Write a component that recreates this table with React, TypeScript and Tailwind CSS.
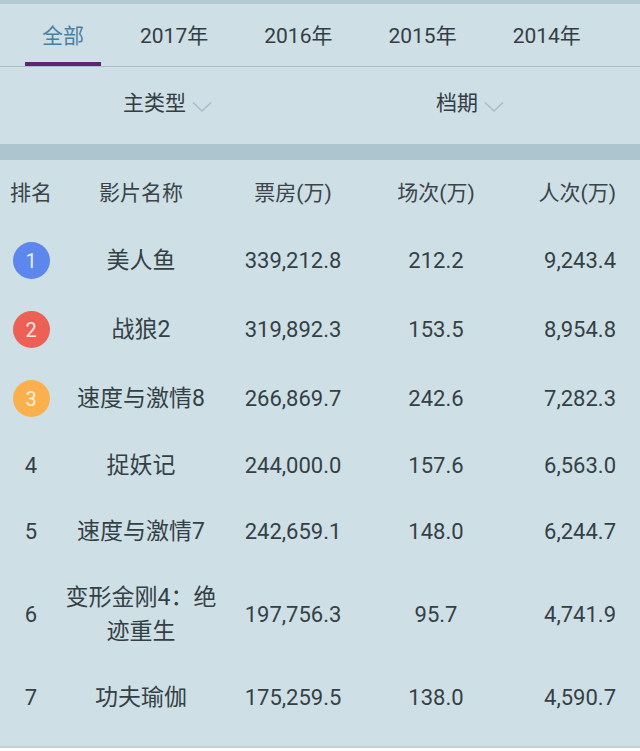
import React from "react";

const tabs = ["全部", "2017年", "2016年", "2015年", "2014年"];

const rows: { rank: number; name: React.ReactNode; box: string; shows: string; people: string }[] = [
  { rank: 1, name: "美人鱼", box: "339,212.8", shows: "212.2", people: "9,243.4" },
  { rank: 2, name: "战狼2", box: "319,892.3", shows: "153.5", people: "8,954.8" },
  { rank: 3, name: "速度与激情8", box: "266,869.7", shows: "242.6", people: "7,282.3" },
  { rank: 4, name: "捉妖记", box: "244,000.0", shows: "157.6", people: "6,563.0" },
  { rank: 5, name: "速度与激情7", box: "242,659.1", shows: "148.0", people: "6,244.7" },
  {
    rank: 6,
    name: (
      <>
        变形金刚4：绝
        <br />
        迹重生
      </>
    ),
    box: "197,756.3",
    shows: "95.7",
    people: "4,741.9",
  },
  { rank: 7, name: "功夫瑜伽", box: "175,259.5", shows: "138.0", people: "4,590.7" },
];

function Chevron() {
  return (
    <svg width="20" height="12" viewBox="0 0 20 12" className="ml-[6px] mt-[6px]">
      <polyline points="1,1.5 10,10 19,1.5" fill="none" stroke="#a9bcc5" strokeWidth="1.4" />
    </svg>
  );
}

function RankBadge({ rank }: { rank: number }) {
  if (rank === 1)
    return (
      <div className="w-[37px] h-[37px] rounded-full bg-[#5d87ec] text-[#e6eefc] flex items-center justify-center text-[20px]">
        1
      </div>
    );
  if (rank === 2)
    return (
      <div className="w-[37px] h-[37px] rounded-full bg-[#ec6055] text-[#fde4e1] flex items-center justify-center text-[20px]">
        2
      </div>
    );
  if (rank === 3)
    return (
      <div className="w-[37px] h-[37px] rounded-full bg-[#fbb04e] text-[#fff1d8] flex items-center justify-center text-[20px]">
        3
      </div>
    );
  return <span className="text-[22px]">{rank}</span>;
}

export default function App() {
  return (
    <div className="w-[640px] h-[751px] bg-[#cedfe6] text-[#353f46] font-['Roboto','Noto_Sans_CJK_SC',sans-serif] flex flex-col overflow-hidden">
      <div className="h-[4px] bg-[#b3cad3]" />
      <div className="h-[63px] flex pl-[14px] border-b border-[#abbec6]">
        {tabs.map((t, i) => (
          <div key={t} className="relative px-[28px] flex flex-col items-center">
            <div
              className={
                "mt-[18px] text-[21px] leading-[28px] " + (i === 0 ? "text-[#4b7fa0]" : "text-[#343d44]")
              }
            >
              {t}
            </div>
            {i === 0 && <div className="absolute bottom-0 w-[76px] h-[4px] bg-[#5f2573]" />}
          </div>
        ))}
      </div>
      <div className="h-[77px] flex items-center pb-[3px]">
        <div className="flex items-center ml-[123px] text-[21px] text-[#343d44]">
          主类型
          <Chevron />
        </div>
        <div className="flex items-center ml-[224px] text-[21px] text-[#343d44]">
          档期
          <Chevron />
        </div>
      </div>
      <div className="h-[16px] bg-[#adc5cf]" />
      <div className="grid grid-cols-[62px_158px_146px_140px_1fr] items-center py-4 text-[21px] leading-[34px] text-[#3a444a]">
        <div className="text-center">排名</div>
        <div className="text-center">影片名称</div>
        <div className="text-center">票房(万)</div>
        <div className="text-center">场次(万)</div>
        <div className="text-right pr-[24px]">人次(万)</div>
      </div>
      <div className="flex-1 flex flex-col">
        {rows.map((r) => (
          <div
            key={r.rank}
            className="grid grid-cols-[62px_158px_146px_140px_1fr] items-center py-4 text-[22px] leading-[34px]"
          >
            <div className="flex justify-center">
              <RankBadge rank={r.rank} />
            </div>
            <div className="text-center text-[23px]">{r.name}</div>
            <div className="text-center">{r.box}</div>
            <div className="text-center">{r.shows}</div>
            <div className="text-right pr-[24px]">{r.people}</div>
          </div>
        ))}
      </div>
      <div className="h-[2px] bg-[#c5d1d5]" />
      <div className="h-[3px] bg-white" />
    </div>
  );
}
